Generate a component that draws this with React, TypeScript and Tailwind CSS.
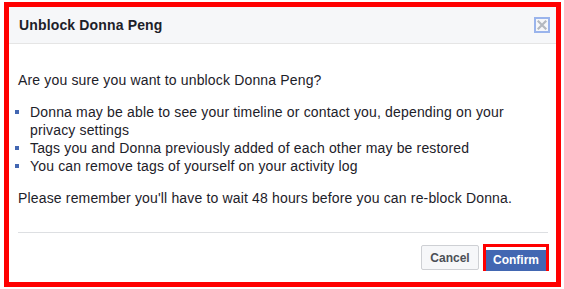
import React from 'react';

const font = { fontFamily: '"Liberation Sans", Arial, sans-serif' };

function CloseBox() {
  return (
    <button className="w-[16px] h-[16px] border-2 border-[#9ab4ec] bg-[#f6f7f9] flex items-center justify-center">
      <svg width="10" height="10" viewBox="0 0 10 10">
        <path d="M1.5 1.5 L8.5 8.5 M8.5 1.5 L1.5 8.5" stroke="#b4b8bf" strokeWidth="2.2" strokeLinecap="square" />
      </svg>
    </button>
  );
}

const bullets = [
  'Donna may be able to see your timeline or contact you, depending on your privacy settings',
  'Tags you and Donna previously added of each other may be restored',
  'You can remove tags of yourself on your activity log',
];

export default function App() {
  return (
    <div className="w-[564px] h-[289px] bg-white overflow-hidden" style={font}>
      <div className="ml-[4px] mt-[2px] w-[557px] h-[285px] border-[5px] border-[#ff0000] flex flex-col bg-white">
        {/* Header */}
        <div className="h-[37px] shrink-0 bg-[#f6f7f9] border-b border-[#e5e5e5] flex items-center justify-between pl-[10px] pr-[6px]">
          <span className="text-[14px] font-bold text-[#1d2129] tracking-[0.15px]">Unblock Donna Peng</span>
          <CloseBox />
        </div>

        {/* Body */}
        <div className="pl-[9px] pr-[8px] pt-[27px] pb-[25px] text-[14px] leading-[18px] text-[#1d2129] tracking-[0.16px]">
          <p>Are you sure you want to unblock Donna Peng?</p>
          <ul className="mt-[14px]">
            {bullets.map((b) => (
              <li key={b} className="flex">
                <span className="mt-[7px] ml-[-3px] mr-[11px] w-[4px] h-[4px] shrink-0 bg-[#4267b2]" />
                <span>{b}</span>
              </li>
            ))}
          </ul>
          <p className="mt-[14px]">Please remember you'll have to wait 48 hours before you can re-block Donna.</p>
        </div>

        {/* Footer */}
        <div className="ml-[9px] mr-[8px] border-t border-[#dddfe2] pt-[12px] pb-[12px]">
          <div className="h-[25px] flex items-center justify-end gap-[4px]">
            <button className="w-[58px] h-[25px] bg-[#f6f7f9] border border-[#ced0d4] rounded-[2px] text-[12px] font-bold text-[#4b4f56]">
              Cancel
            </button>
            <div className="w-[66px] h-[27px] border-[3px] border-[#ff0000] mr-[-1px]">
              <button className="w-full h-full bg-[#4267b2] text-[12px] font-bold text-white">Confirm</button>
            </div>
          </div>
        </div>
      </div>
    </div>
  );
}
